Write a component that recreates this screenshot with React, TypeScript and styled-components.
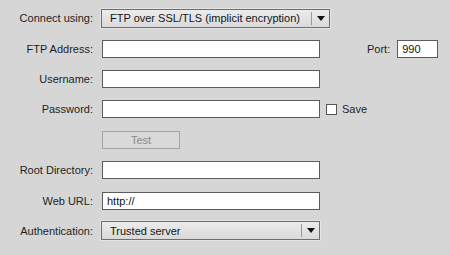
import React from "react";
import styled, { createGlobalStyle } from "styled-components";

const GlobalStyle = createGlobalStyle`
    html, body {
        margin: 0;
        padding: 0;
        background: #d6d6d6;
    }
    body {
        font-family: "Liberation Sans", Arial, sans-serif;
        font-size: 11px;
        color: #1e1e1e;
    }
`

const Panel = styled.div`
    width: 450px;
    height: 255px;
    background: #d6d6d6;
    padding-top: 3px;
    box-sizing: border-box;
`

const Row = styled.div`
    display: flex;
    align-items: center;
    height: 30.4px;
`

const Label = styled.label`
    width: 101px;
    flex: none;
    text-align: right;
    padding-right: 8px;
    box-sizing: border-box;
    white-space: nowrap;
`

const Field = styled.div<{ $width: number }>`
    width: ${p => p.$width}px;
    height: 18px;
    box-sizing: border-box;
    margin-left: 1px;
    background: #fff;
    border: 1px solid #5c5c5c;
    padding: 0 4px;
    display: flex;
    align-items: center;
    white-space: nowrap;
    color: #111;
`

const Select = styled.div<{ $width: number }>`
    width: ${p => p.$width}px;
    height: 19px;
    box-sizing: border-box;
    border: 1px solid #6e6e6e;
    background: linear-gradient(#ececec, #d9d9d9);
    box-shadow: 0 0 0 1px rgba(255, 255, 255, 0.35);
    display: flex;
    align-items: center;
    white-space: nowrap;
    color: #151515;
`

const SelectText = styled.span`
    flex: 1;
    padding-left: 8px;
`

const SelectArrow = styled.span`
    width: 17px;
    height: 13px;
    border-left: 1px solid #9a9a9a;
    display: flex;
    align-items: center;
    justify-content: center;
`

const Triangle = styled.span`
    width: 0;
    height: 0;
    border-left: 4px solid transparent;
    border-right: 4px solid transparent;
    border-top: 5px solid #111;
    margin-left: 1px;
`

const PortLabel = styled.span`
    margin-left: 47px;
    margin-right: 6px;
`

const CheckBox = styled.span`
    width: 11px;
    height: 11px;
    box-sizing: border-box;
    background: #fff;
    border: 1px solid #555;
    margin-left: 6px;
    margin-right: 5px;
`

const Button = styled.div`
    width: 78px;
    height: 18px;
    box-sizing: border-box;
    margin-left: 102px;
    border: 1px solid #a4a4a4;
    background: #d9d9d9;
    color: #8a8a8a;
    display: flex;
    align-items: center;
    justify-content: center;
`

export default function App() {
    return (
        <Panel>
            <GlobalStyle />
            <Row>
                <Label>Connect using:</Label>
                <Select $width={229}>
                    <SelectText>FTP over SSL/TLS (implicit encryption)</SelectText>
                    <SelectArrow><Triangle /></SelectArrow>
                </Select>
            </Row>
            <Row>
                <Label>FTP Address:</Label>
                <Field $width={218} />
                <PortLabel>Port:</PortLabel>
                <Field $width={41}>990</Field>
            </Row>
            <Row>
                <Label>Username:</Label>
                <Field $width={218} />
            </Row>
            <Row>
                <Label>Password:</Label>
                <Field $width={218} />
                <CheckBox />
                <span>Save</span>
            </Row>
            <Row>
                <Button>Test</Button>
            </Row>
            <Row>
                <Label>Root Directory:</Label>
                <Field $width={218} />
            </Row>
            <Row>
                <Label>Web URL:</Label>
                <Field $width={218}>http://</Field>
            </Row>
            <Row>
                <Label>Authentication:</Label>
                <Select $width={219}>
                    <SelectText>Trusted server</SelectText>
                    <SelectArrow><Triangle /></SelectArrow>
                </Select>
            </Row>
        </Panel>
    );
}
